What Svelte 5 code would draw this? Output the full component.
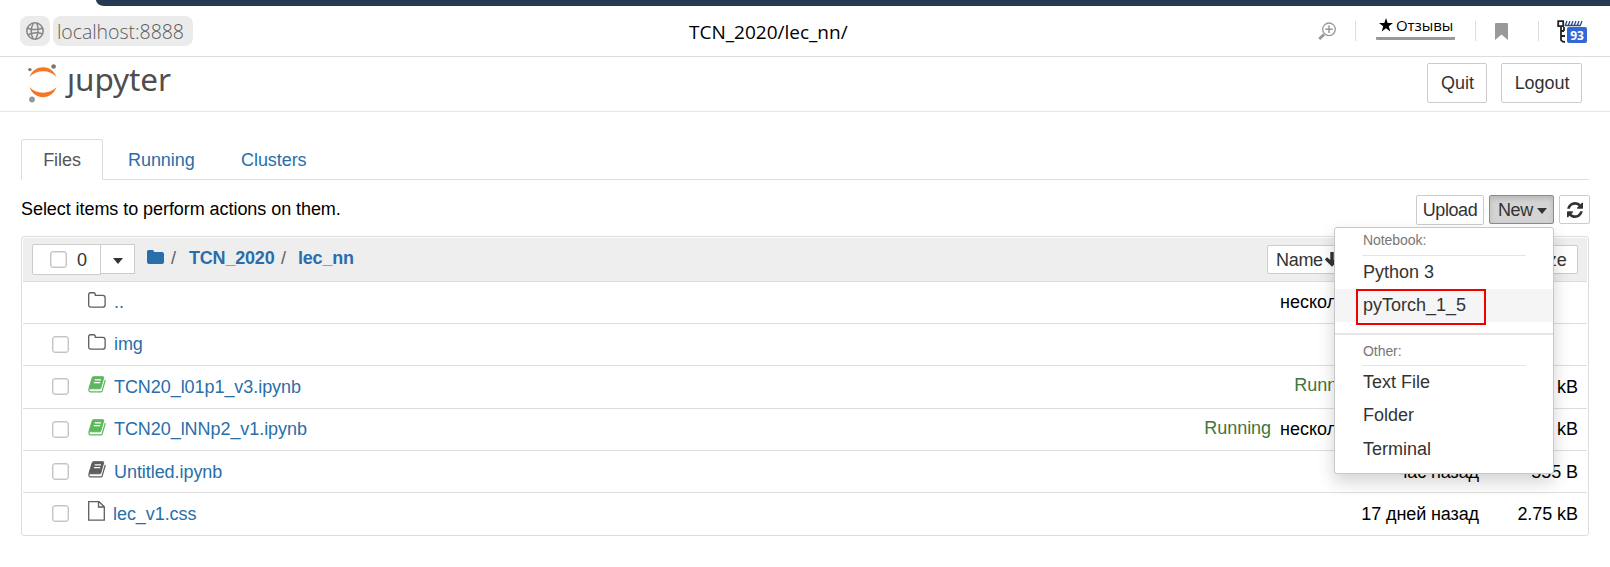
<script>
  const rows = [
    { icon: 'folder', name: '..', time: 'несколько секунд назад', size: '', check: false, h: 42 },
    { icon: 'folder', name: 'img', time: '', size: '', check: true, h: 42 },
    { icon: 'book', name: 'TCN20_l01p1_v3.ipynb', running: true, time: 'час назад', short: true, size: '9.85 kB', green: true, check: true, h: 43 },
    { icon: 'book', name: 'TCN20_lNNp2_v1.ipynb', running: true, time: 'несколько секунд назад', size: '28.4 kB', green: true, check: true, h: 42 },
    { icon: 'book', name: 'Untitled.ipynb', time: 'час назад', size: '555 B', check: true, low: true, h: 42 },
    { icon: 'file', name: 'lec_v1.css', time: '17 дней назад', size: '2.75 kB', check: true, low: true, h: 42 }
  ];
</script>

<div class="page">
  <div class="strip"></div>
  <div class="address">
    <span class="globe">
      <svg width="18" height="18" viewBox="0 0 18 18" fill="none" stroke="#858585" stroke-width="1.5">
        <circle cx="9" cy="9" r="8.2" />
        <path d="M1.5 6.2Q9 9 16.5 6.2M1.8 13Q9 9.3 16.7 12M7.5 1Q3 9 7.2 17M10.7 1Q14 9 9.7 17" />
      </svg>
    </span>
    <span class="host"><span>localhost:8888</span></span>
    <span class="title">TCN_2020/lec_nn/</span>
    <div class="tools">
      <svg class="mag" width="18" height="19" viewBox="0 0 18 19" fill="none" stroke="#999">
        <circle cx="11" cy="7.3" r="6.3" stroke-width="1.3" />
        <path d="M11 3.5v7.6M7.2 7.3h7.6" stroke-width="1.5" />
        <path d="M6 12.5L1.2 17" stroke-width="3" />
      </svg>
      <i class="sep s1"></i>
      <span class="reviews">
        <svg width="14" height="14" viewBox="0 0 14 14"><path d="M7 0l1.7 5H14L9.800 8.200l1.500 5.300L7 10.300 2.700 13.500l1.500-5.300L0 5h5.300z" /></svg>
        <span>Отзывы</span>
      </span>
      <i class="sep s2"></i>
      <svg class="mark" width="13" height="17" viewBox="0 0 13 17"><path d="M1 0h11q1 0 1 1v16l-6.500-5.500L0 17V1q0-1 1-1z" fill="#999" /></svg>
      <i class="sep s3"></i>
      <span class="ext">
        <svg width="28" height="24" viewBox="0 0 28 24" fill="none">
          <path d="M1.200 1.200h5v5h-5zM4 6v5h3M4 11v5h4M4 15v5q1 2 4 2M7 7v4" stroke="#222" stroke-width="1.800" />
          <path d="M8 6l2-5M11 6l2-5M14 6l2-5M17 6l2-5M20 6l2-5M23 6l2-5M8 5.500h15" stroke="#2a4b8c" stroke-width="1.300" />
        </svg>
        <b>93</b>
      </span>
    </div>
  </div>

  <header>
    <svg class="planet" width="30" height="40" viewBox="0 0 30 40">
      <path d="M1.500 14C6 1 24 1 28.500 14 22 6.300 8 6.300 1.500 14zM1.500 24C6 37.500 24 37.500 28.500 24 22 31.500 8 31.500 1.500 24z" fill="#f37726" />
      <circle cx="25.600" cy="3.500" r="2.300" fill="#767677" />
      <circle cx="1.900" cy="6.600" r="1.700" fill="#767677" />
      <circle cx="4" cy="36.500" r="2.900" fill="#989798" />
    </svg>
    <span class="word">ȷupyter</span>
    <button class="quit">Quit</button>
    <button class="logout">Logout</button>
  </header>

  <nav>
    <a class="active">Files</a>
    <a class="run">Running</a>
    <a class="clu">Clusters</a>
  </nav>

  <div class="actions">
    <span class="hint">Select items to perform actions on them.</span>
    <button class="upload">Upload</button>
    <div class="newwrap">
      <button class="new">New<i class="caret"></i></button>
      <div class="menu">
        <div class="group first">Notebook:</div>
        <div class="item py">Python 3</div>
        <div class="item hot"><span>pyTorch_1_5</span></div>
        <div class="divider"></div>
        <div class="group second">Other:</div>
        <div class="item text">Text File</div>
        <div class="item">Folder</div>
        <div class="item end">Terminal</div>
      </div>
    </div>
    <button class="refresh" aria-label="Refresh">
      <svg width="16" height="16" viewBox="0 0 1536 1536" fill="#333"><path d="M1511 928q0 5-1 7-64 268-268 434.500T764 1536q-146 0-282.500-55T238 1324l-129 129q-19 19-45 19t-45-19-19-45V960q0-26 19-45t45-19h448q26 0 45 19t19 45-19 45l-137 137q71 66 161 102t187 36q134 0 250-65t186-179q11-17 53-117 8-23 30-23h192q13 0 22.500 9.500t9.500 22.500zm25-800v448q0 26-19 45t-45 19h-448q-26 0-45-19t-19-45 19-45l138-138Q969 256 768 256q-134 0-250 65T332 500q-11 17-53 117-8 23-30 23H50q-13 0-22.500-9.500T18 608v-7q65-268 270-434.500T768 0q146 0 284 55.500T1297 212l130-129q19-19 45-19t45 19 19 45z" /></svg>
    </button>
  </div>

  <main>
    <div class="head">
      <div class="select"><i class="box"></i><span>0</span></div>
      <div class="drop"><i class="caret"></i></div>
      <svg class="home" width="17" height="14" viewBox="0 0 17 14"><path d="M1.500 0h4q1.500 0 1.500 1.500V2h8q2 0 2 2v8q0 2-2 2H2q-2 0-2-2V1.500Q0 0 1.500 0z" fill="#296eaa" /></svg>
      <span class="slash a">/</span><b class="c1">TCN_2020</b><span class="slash b">/</span><b class="c2">lec_nn</b>
      <div class="sorts">
        <button class="name">Name <svg width="16" height="15" viewBox="0 0 16 15"><path d="M6.300 0h3.400v8L13 5.300l2.200 2.200L8 14.800.8 7.500 3 5.300l3.300 2.700z" fill="#333" /></svg></button>
        <button class="mod">Last Modified</button>
        <button class="size">File size</button>
      </div>
    </div>
    {#each rows as r, i}
      <div class="row" class:last={i === rows.length - 1} class:tall={r.h === 43} class:low={r.low}>
        <i class="box" class:hide={!r.check}></i>
        <span class="icon">
          {#if r.icon === 'folder'}
            <svg width="18" height="16" viewBox="0 0 18 15" preserveAspectRatio="none"><path d="M2.500.700h3q1.800 0 1.800 1.800v.700h7.500q2.300 0 2.300 2.200v6.500q0 2.300-2.300 2.300H2.700Q.7 14.200.7 12V2.500Q.7.700 2.500.700z" fill="none" stroke="#5e5e5e" stroke-width="1.300" /></svg>
          {:else if r.icon === 'book'}
            <svg width="18" height="17" viewBox="0 0 18 17">
              <g fill={r.green ? '#5cb85c' : '#5e5e5e'} stroke={r.green ? '#5cb85c' : '#5e5e5e'}>
                <path d="M5.300.700h9.700q1 0 .700 1L12.700 12.300q-.200.500-.800.500H1.700Q.8 12.800 1.100 11.800L4.300 1.500Q4.500.700 5.300.700z" />
                <path d="M1.100 12.500Q.3 15.900 2.600 15.900h10.300q.900 0 1.200-.900L17.300 4" fill="none" stroke-width="1.200" />
              </g>
              <path d="M6.700 3.900h6.300M5.900 6.600h6.300" stroke="#fff" stroke-width="1.100" />
            </svg>
          {:else}
            <svg class="file" width="17" height="20" viewBox="0 0 17 20"><path d="M1.200.700H11l5.300 5v13.500H.7V.700zM10.500.700V6h5.800" fill="none" stroke="#5e5e5e" stroke-width="1.300" /></svg>
          {/if}
        </span>
        <a class:nudge={r.icon === 'file'}>{r.name}</a>
        {#if r.running}<span class="running">Running</span>{/if}
        <span class="time" class:short={r.short}>{r.time}</span>
        <span class="bytes">{r.size}</span>
      </div>
    {/each}
  </main>
</div>

<style>
  :global(body) { margin: 0; background: #fff; }
  .page { width: 1610px; height: 567px; overflow: hidden; box-sizing: border-box; font: 18px/26px "Liberation Sans", Arial, sans-serif; letter-spacing: -0.06px; color: #000; }
  .page *, .page *::after { box-sizing: border-box; }
  .strip { height: 6px; margin-left: 96px; background: #253951; border-bottom-left-radius: 8px 6px; }
  .address { height: 51px; border-bottom: 1px solid #ddd; display: flex; align-items: flex-start; padding: 10px 0 0 20px; font-family: "Open Sans", "Noto Sans", sans-serif; }
  .globe { width: 30px; height: 30px; border-radius: 8px; background: #ebebeb; display: flex; justify-content: center; padding-top: 6px; margin-right: 3px; }
  .host { width: 140px; height: 30px; border-radius: 8px; background: #ebebeb; padding-left: 4px; font-size: 19.500px; line-height: 32px; color: #5c5c5c; letter-spacing: -0.05px; font-weight: 300; }
  .title { margin-left: 496px; width: 200px; font-size: 19px; line-height: 32px; letter-spacing: 0; }
  .tools { flex: 1; display: flex; align-items: flex-start; padding: 5px 0 0 430px; }
  svg { display: block; flex: none; }
  .mag { margin-top: 1px; margin-left: -1px; }
  .sep { width: 1px; height: 20px; background: #ddd; flex: none; }
  .s1 { margin-left: 19px; }
  .reviews { width: 79px; height: 24px; margin: -5px 20px 0 20px; border-bottom: 3px solid #999; display: flex; padding: 2px 0 0 3px; gap: 3px; font-size: 15px; line-height: 16px; white-space: nowrap; border-radius: 0 0 1px 1px; }
  .reviews span { margin-top: -1px; }
  .mark { margin: 2px 30px 0 19px; }
  .ext { position: relative; margin-left: 18px; margin-top: -1px; letter-spacing: 0; }
  .ext b { position: absolute; left: 10px; top: 7px; width: 20px; height: 16px; background: #3367d6; color: #fff; border-radius: 2px; font-size: 12px; line-height: 17px; text-align: center; }

  header { height: 55px; border-bottom: 1px solid #e7e7e7; display: flex; padding: 6px 28px 0 28px; }
  .word { font: 31.500px/40px "Noto Sans", sans-serif; letter-spacing: -0.1px; color: #4e4e4e; margin: -4px 0 0 9px; flex: 1; }
  button { font: inherit; letter-spacing: inherit; padding: 0; margin: 0; background: #fff; border: 1px solid #ccc; color: #333; border-radius: 2px; white-space: nowrap; flex: none; }
  header button { height: 40px; padding-left: 1px; }
  .quit { width: 60px; margin-right: 14px; }
  .logout { width: 81px; }

  nav { display: flex; height: 68px; padding-top: 27px; margin: 0 21px; border-bottom: 1px solid #ddd; color: #296eaa; }
  nav a { line-height: 42px; }
  nav .active { width: 82px; height: 41px; border: 1px solid #ddd; border-bottom-color: #fff; border-radius: 3px 3px 0 0; color: #555; text-align: center; background: #fff; line-height: 40px; }
  .run { margin-left: 25px; width: 113px; }

  .actions { display: flex; height: 56px; padding: 15px 20px 0 21px; }
  .hint { flex: 1; line-height: 28px; }
  .upload { width: 68px; height: 30px; margin-right: 5px; letter-spacing: -0.4px; }
  .newwrap { position: relative; margin-right: 5px; }
  .new { width: 65px; height: 29px; background: #d4d4d4; border-color: #8c8c8c; box-shadow: inset 0 3px 5px rgba(0,0,0,.125); display: flex; align-items: center; padding-left: 8px; gap: 4px; letter-spacing: -0.4px; }
  .new .caret { margin-top: 3px; }
  .caret { width: 0; height: 0; border: 5.500px solid transparent; border-top: 6px solid #333; border-bottom: 0; flex: none; }
  .refresh { width: 31px; height: 29px; display: flex; align-items: center; justify-content: center; }
  .menu { position: absolute; z-index: 5; top: 32px; left: -155px; width: 220px; height: 247px; background: #fff; border: 1px solid #c8c8c8; border-radius: 3px; box-shadow: 0 8px 17px rgba(0,0,0,.175); color: #333; }
  .group { font-size: 14px; line-height: 16px; color: #777; margin: 0 27px 0 27px; padding-left: 1px; border-bottom: 1px solid #e5e5e5; }
  .first { padding-top: 4px; height: 28px; }
  .second { padding-top: 8px; height: 31px; }
  .item { height: 33px; line-height: 33px; padding-left: 28px; letter-spacing: 0; }
  .end { line-height: 35px; }
  .hot { position: relative; background: #f5f5f5; }
  .hot::after { content: ""; position: absolute; left: 21px; top: 0; width: 130px; height: 36px; border: 2px solid #f00000; }
  .divider { height: 2px; background: #e5e5e5; margin-top: 11px; }

  main { margin: 0 21px; border: 1px solid #ddd; border-radius: 3px; padding: 1px; height: 300px; }
  .head { height: 44px; background: #eee; border-bottom: 1px solid #ddd; display: flex; padding: 6px 9px 0 9px; color: #333; }
  .box { width: 17px; height: 17px; border: 1px solid #c4c4c4; border-radius: 3px; background: #fff; flex: none; box-shadow: inset 0 0 0 .5px #ccc; }
  .select { width: 69px; height: 31px; border: 1px solid #ccc; background: #fff; display: flex; align-items: center; padding-left: 17px; gap: 10px; border-radius: 2px 0 0 2px; }
  .drop { width: 35px; height: 30px; margin-left: -1px; border: 1px solid #ccc; background: #fff; display: flex; align-items: center; justify-content: center; padding-top: 3px; }
  .home { margin: 6px 0 0 12px; }
  .head b { color: #296eaa; line-height: 28px; letter-spacing: -0.2px; }
  .slash { line-height: 28px; width: 5px; color: #5e5e5e; }
  .slash.a { margin: 0 13px 0 7px; }
  .slash.b { margin: 0 12px 0 8px; }
  .c1 { width: 84px; }
  .sorts { display: flex; margin-left: auto; padding-top: 1px; }
  .sorts button { height: 29px; }
  .name { width: 86px; display: flex; align-items: flex-start; padding: 0 0 0 8px; line-height: 29px; letter-spacing: -0.3px; }
  .name svg { margin-top: 6px; margin-left: 1px; }
  .mod { width: 133px; margin-left: 2px; }
  .size { width: 88px; margin-left: 2px; }
  .row { height: 42px; border-bottom: 1px solid #ddd; display: flex; padding: 0 9px 0 29px; }
  .tall { height: 43px; }
  .last { border-bottom: 0; }
  .row .box { margin-top: 12px; }
  .hide { visibility: hidden; }
  .icon { width: 18px; margin: 10px 8px 0 19px; }
  .file { margin-top: -2px; }
  .row a { color: #296eaa; line-height: 41px; }
  .tall a, .low a { line-height: 43px; }
  .nudge { margin-left: -1px; }
  .running { margin-left: auto; color: #3c763d; line-height: 38px; }
  .time { width: 199px; margin-left: auto; line-height: 41px; text-align: right; white-space: nowrap; letter-spacing: 0; }
  .running + .time { margin-left: 9px; }
  .running + .short { width: 109px; }
  .bytes { width: 99px; text-align: right; line-height: 41px; }
  .low .time { letter-spacing: -0.1px; }
  .low .time, .low .bytes, .tall .bytes { line-height: 43px; }
</style>
